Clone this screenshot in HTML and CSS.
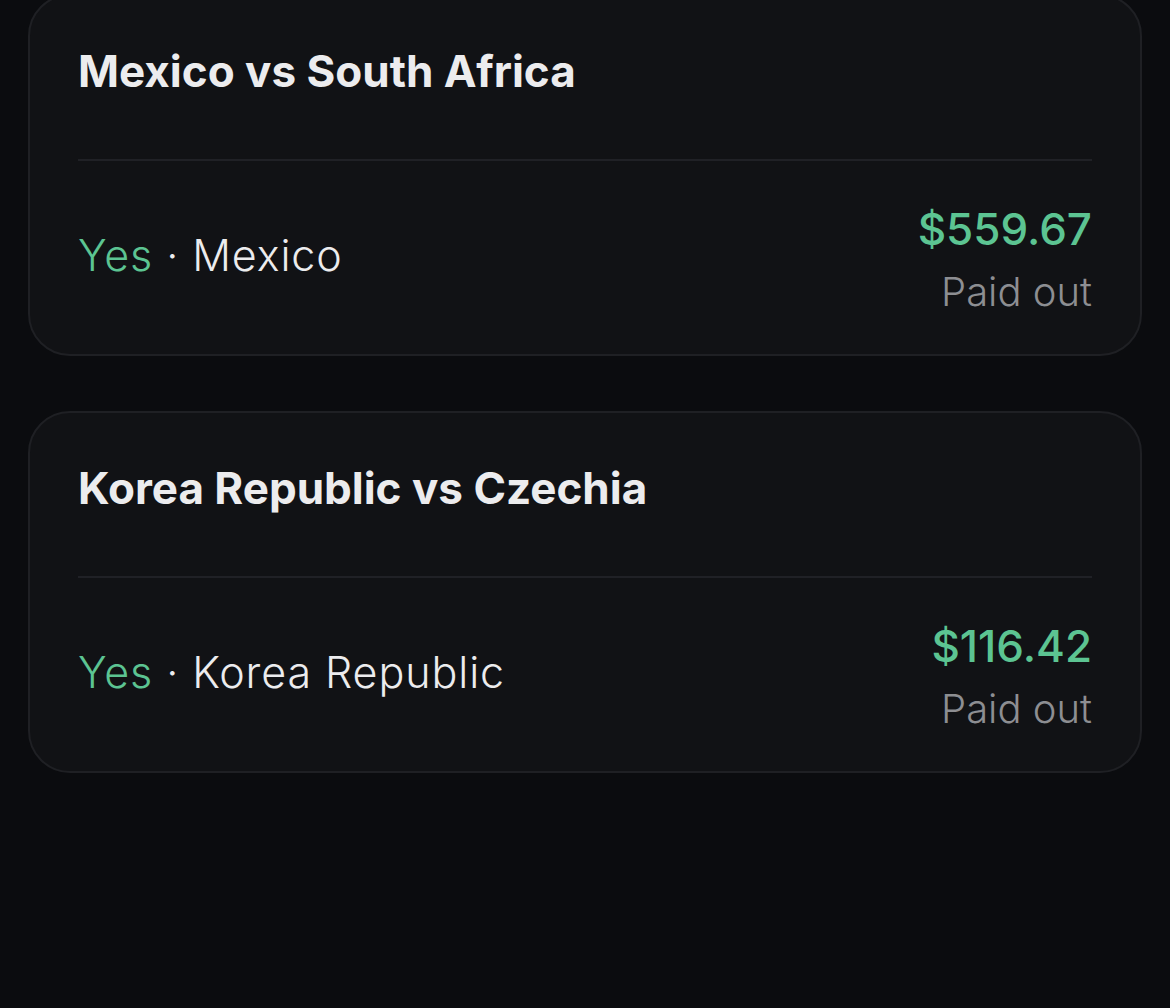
FILE: index.html
```html
<!DOCTYPE html>
<html lang="en">
<head>
    <meta charset="UTF-8">
    <meta name="viewport" content="width=device-width, initial-scale=1.0">
    <title>Settled positions</title>
    <link rel="stylesheet" href="styles.css">
</head>
<body>
    <div class="positions">
        <div class="card">
            <h2 class="match">Mexico vs South Africa</h2>
            <div class="divider"></div>
            <div class="bet">
                <div class="pick"><span class="side">Yes</span> · Mexico</div>
                <div class="payout">
                    <div class="amount">$559.67</div>
                    <div class="status">Paid out</div>
                </div>
            </div>
        </div>
        <div class="card">
            <h2 class="match">Korea Republic vs Czechia</h2>
            <div class="divider"></div>
            <div class="bet">
                <div class="pick"><span class="side">Yes</span> · Korea Republic</div>
                <div class="payout">
                    <div class="amount">$116.42</div>
                    <div class="status">Paid out</div>
                </div>
            </div>
        </div>
    </div>
</body>
</html>
```

FILE: styles.css
```css
body {
    margin: 0;
    background-color: #0b0c0f;
    font-family: Inter, "Noto Sans", sans-serif;
    color: #ececee;
}
.positions {
    display: flex;
    flex-direction: column;
    gap: 55px;
    padding: 0 28px;
    margin-top: -6px;
}
.card {
    background-color: #111215;
    border: 2px solid #1f2024;
    border-radius: 42px;
    padding: 49px 48px 32px;
}
.match {
    margin: 0;
    font-size: 44px;
    line-height: 52px;
    font-weight: 700;
}
.divider {
    height: 2px;
    background-color: #202126;
    margin-top: 62px;
}
.bet {
    display: flex;
    justify-content: space-between;
    align-items: center;
    margin-top: 41px;
}
.pick {
    font-size: 43px;
    line-height: 52px;
    font-weight: 300;
    letter-spacing: 0.9px;
    padding-bottom: 14px;
}
.side {
    color: #5cc492;
}
.payout {
    text-align: right;
}
.amount {
    color: #5cc492;
    font-size: 44px;
    line-height: 54px;
    font-weight: 500;
}
.status {
    color: #8d8e92;
    font-size: 40px;
    line-height: 60px;
    font-weight: 300;
    margin-top: 6px;
}
```
